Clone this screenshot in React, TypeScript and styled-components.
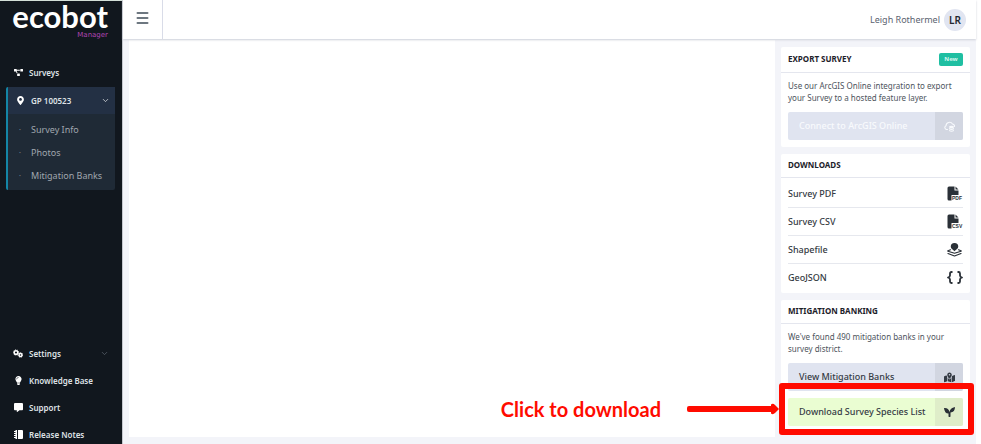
import React from "react";
import styled, { createGlobalStyle } from "styled-components";
import {
  FaProjectDiagram,
  FaMapMarkerAlt,
  FaLightbulb,
} from "react-icons/fa";
import { FaMapLocationDot, FaMessage } from "react-icons/fa6";
import { FiChevronDown } from "react-icons/fi";

const GlobalStyle = createGlobalStyle`
  * { box-sizing: border-box; }
  body { margin: 0; background: #fff; font-family: "Noto Sans", "Open Sans", sans-serif; color: #2a3038; }
  button { font: inherit; color: inherit; border: 0; padding: 0; background: none; cursor: pointer; }
  a { color: inherit; text-decoration: none; }
  h2, p, ul { margin: 0; padding: 0; }
  ul { list-style: none; }
`;

const Shell = styled.div`
  display: flex;
  height: 100vh;
  overflow: hidden;
  padding-right: 5px;
`;

const Sidebar = styled.aside`
  width: 123px;
  flex: none;
  display: flex;
  flex-direction: column;
  background: #11171e;
  border-top: 1px solid #d3dfd8;
  border-right: 1px solid #c5c8cf;
  color: #dfe2e6;
`;

const Brand = styled.a`
  display: flex;
  flex-direction: column;
  align-items: flex-end;
  height: 58px;
  flex: none;
  padding-right: 14px;
`;

const BrandName = styled.span`
  font: 700 31px/30px Lato, sans-serif;
  color: #fff;
`;

const BrandSub = styled.span`
  font: 400 7px/8px "DejaVu Sans", sans-serif;
  color: #b044b2;
`;

const NavLink = styled.a`
  display: flex;
  align-items: center;
  flex: none;
  height: 27px;
  padding: 0 6px 0 13px;
  font-size: 8px;
  font-weight: 600;
  white-space: nowrap;
`;

const NavIcon = styled.span`
  display: flex;
  justify-content: center;
  width: 10px;
  margin-right: 6px;
  color: #fff;
  font-size: 9px;
`;

const Chevron = styled(FiChevronDown)<{ $dim?: boolean }>`
  margin-left: auto;
  font-size: 9px;
  color: ${(p) => (p.$dim ? "#5b636d" : "#dfe2e6")};
`;

const Group = styled.div`
  flex: none;
  margin: 1px 7px 0 6px;
  border-left: 2px solid #1485a6;
  border-radius: 2px;
  background: #1f2a36;
`;

const GroupHeader = styled(NavLink)`
  background: #233044;
  padding: 0 5px 0 7px;
`;

const SubList = styled.ul`
  padding: 4px 0 3px;
`;

const SubLink = styled.a`
  display: flex;
  align-items: center;
  height: 23px;
  font-size: 9px;
  color: #a0a7af;

  &::before {
    content: "·";
    width: 10px;
    margin: 0 6px 0 7px;
    text-align: center;
    color: #69737e;
  }
`;

const FooterNav = styled.nav`
  flex: none;
  margin-top: 150px;
  & ${Chevron} { margin-right: 7px; }
`;

const Main = styled.div`
  flex: 1;
  min-width: 0;
  display: flex;
  flex-direction: column;
  background: #f3f4f9;
`;

const Header = styled.header`
  display: flex;
  align-items: center;
  flex: none;
  height: 39px;
  padding-right: 10px;
  background: #fff;
  box-shadow: 0 1px 2px #cfd2da;
  z-index: 1;
`;

const MenuButton = styled.button`
  display: flex;
  align-items: center;
  justify-content: center;
  align-self: stretch;
  width: 40px;
  padding-bottom: 3px;
  border-right: 1px solid #d9dce8;
  color: #6d7780;
`;

const User = styled.div`
  display: flex;
  align-items: center;
  gap: 4px;
  margin-left: auto;
  font-size: 9px;
  color: #5b6370;
`;

const Avatar = styled.span`
  display: grid;
  place-items: center;
  width: 22px;
  height: 22px;
  border-radius: 50%;
  background: #e1e5f1;
  color: #22272f;
  font-size: 10px;
  font-weight: 600;
`;

const Body = styled.main`
  flex: 1;
  min-height: 0;
  display: flex;
  gap: 6px;
  padding: 1px 6px 7px;
`;

const Canvas = styled.section`
  flex: 1;
  background: #fff;
`;

const Side = styled.div`
  width: 189px;
  flex: none;
  display: flex;
  flex-direction: column;
  gap: 7px;
  padding-top: 7px;
`;

const Card = styled.section`
  background: #fff;
  border-radius: 2px;
`;

const CardHeader = styled.div`
  display: flex;
  align-items: center;
  justify-content: space-between;
  padding: 5px 7px 6px;
  border-bottom: 1px solid #e4e6ee;
`;

const CardTitle = styled.h2`
  font-size: 8px;
  line-height: 12px;
  font-weight: 700;
  color: #1c2129;
`;

const Tag = styled.span`
  width: 24px;
  height: 13px;
  margin-top: 1px;
  border-radius: 2px;
  background: #1fbfa2;
  color: #d6f6ef;
  font-size: 6px;
  font-weight: 700;
  line-height: 13px;
  text-align: center;
`;

const CardBody = styled.div`
  padding: 7px;
`;

const Note = styled.p`
  margin-bottom: 8px;
  font-size: 8px;
  line-height: 12px;
  color: #4d545d;
`;

const Action = styled.button<{ $tone: "blue" | "green"; $faded?: boolean }>`
  display: flex;
  width: 100%;
  height: 28px;
  border-radius: 2px;
  overflow: hidden;
  background: ${(p) => (p.$tone === "green" ? "#eafdd2" : "#e0e4f0")};
  color: ${(p) => (p.$faded ? "#f8fafd" : "#353b44")};
  font-size: 9px;
  font-weight: 500;
  white-space: nowrap;
`;

const ActionLabel = styled.span`
  flex: 1;
  padding-left: 11px;
  line-height: 28px;
  text-align: left;
`;

const ActionIcon = styled.span<{ $tone: "blue" | "green" }>`
  display: grid;
  place-items: center;
  width: 28px;
  height: 28px;
  font-size: 11px;
  background: ${(p) => (p.$tone === "green" ? "#dfedc9" : "#d2d6e1")};
`;

const Downloads = styled.ul`
  padding: 2px 7px 1px;
`;

const DownloadRow = styled.li`
  height: 28px;
  border-bottom: 1px solid #e6e8ee;
  &:last-child { border-bottom-color: transparent; }
`;

const DownloadLink = styled.a`
  display: flex;
  align-items: center;
  justify-content: space-between;
  height: 27px;
  font-size: 9px;
  font-weight: 500;
  color: #343a42;
`;

const DownloadIcon = styled.span`
  display: grid;
  place-items: center;
  width: 17px;
`;

const Callout = styled.div`
  position: relative;
  margin-top: 7px;
`;

const Frame = styled.div`
  position: absolute;
  inset: -15px -11px -9px -9px;
  border: 6px solid #ff0b00;
  border-radius: 3px;
  pointer-events: none;
`;

const Pointer = styled.div`
  position: absolute;
  top: -2px;
  right: 100%;
  display: flex;
  align-items: center;
  gap: 26px;
  height: 26px;
  margin-right: 9px;
  font: 700 20px/26px Lato, sans-serif;
  color: #ff0b00;
  white-space: nowrap;
`;

const MenuIcon = () => (
  <svg width="13" height="12" viewBox="0 0 13 12" stroke="currentColor" strokeWidth="2" strokeLinecap="round">
    <path d="M1.500 1h10M1.500 6h10M1.500 11h10" />
  </svg>
);

const GearsIcon = () => (
  <svg width="10" height="9" viewBox="0 0 20 18" fill="none" stroke="currentColor">
    <g strokeWidth="3">
      <circle cx="6" cy="7" r="3.600" />
      <circle cx="15" cy="12" r="3" />
    </g>
    <g strokeWidth="1.600" strokeDasharray="2 1.800">
      <circle cx="6" cy="7" r="5.400" />
      <circle cx="15" cy="12" r="4.600" />
    </g>
  </svg>
);

const NotebookIcon = () => (
  <svg width="9" height="9" viewBox="0 0 18 18" fill="currentColor">
    <path d="M3 0h3v18H3v-2H0v-2h3v-2H0v-2h3V8H0V6h3V4H0V2h3zM8 0h8a2 2 0 0 1 2 2v14a2 2 0 0 1-2 2H8z" />
  </svg>
);

const FileIcon = ({ kind }: { kind: string }) => (
  <svg width="16" height="15" viewBox="0 0 32 30" fill="#2a3037">
    <path d="M4 1h11v8h8v9H9v11H4a3 3 0 0 1-3-3V4a3 3 0 0 1 3-3zM17 1l6 6h-6z" />
    <text x="10" y="28" fontFamily="Liberation Sans, sans-serif" fontWeight="700" fontSize="10">{kind}</text>
  </svg>
);

const ShapeIcon = () => (
  <svg width="15" height="14" viewBox="0 0 30 28" fill="#2a3037">
    <path d="M15 0a7.500 7.500 0 0 1 7.500 7.500c0 4-4 5.500-7.500 9-3.500-3.500-7.500-5-7.500-9A7.500 7.500 0 0 1 15 0z" />
    <g fill="none" stroke="#2a3037" strokeWidth="2.400" strokeLinejoin="round" strokeLinecap="round">
      <path d="M7 13.500l-5 2q-1 .5 0 1l13 4 13-4q1-.5 0-1l-5-2" />
      <path d="M2 21l13 5 13-5" />
    </g>
  </svg>
);

const BracesIcon = () => (
  <svg width="16" height="13" viewBox="0 0 32 26" fill="none" stroke="#2a3037" strokeWidth="3.600" strokeLinejoin="round">
    <path d="M11 2H9Q6 2 6 5v4q0 3-4 4 4 1 4 4v4q0 3 3 3h2M21 2h2q3 0 3 3v4q0 3 4 4-4 1-4 4v4q0 3-3 3h-2" />
  </svg>
);

const CloudIcon = () => (
  <svg width="11" height="11" viewBox="0 0 22 22" fill="none" stroke="currentColor" strokeWidth="2.200" strokeLinecap="round">
    <path d="M7 17H5a4 4 0 0 1-1-7.600A7 7 0 0 1 17 6a4.500 4.500 0 0 1 4 5" />
    <g fill="currentColor" stroke="none">
      <ellipse cx="15" cy="12" rx="5" ry="2.400" />
      <path d="M10 14q5 3 10 0v2.500q-5 3-10 0zM10 18q5 3 10 0v2q-5 3-10 0z" />
    </g>
  </svg>
);

const SeedlingIcon = () => (
  <svg width="11" height="10" viewBox="0 0 22 20" fill="#2a3037">
    <path d="M0 2q9-1 11 8 1-8 11-10 0 10-9 11v8q-2 2-4 0v-6Q1 13 0 2z" />
  </svg>
);

const subItems = ["Survey Info", "Photos", "Mitigation Banks"];

const footerItems = [
  { label: "Settings", icon: <GearsIcon />, expands: true },
  { label: "Knowledge Base", icon: <FaLightbulb /> },
  { label: "Support", icon: <FaMessage /> },
  { label: "Release Notes", icon: <NotebookIcon /> },
];

const downloads = [
  { label: "Survey PDF", icon: <FileIcon kind="PDF" /> },
  { label: "Survey CSV", icon: <FileIcon kind="CSV" /> },
  { label: "Shapefile", icon: <ShapeIcon /> },
  { label: "GeoJSON", icon: <BracesIcon /> },
];

export default function App() {
  return (
    <>
      <GlobalStyle />
      <Shell>
        <Sidebar>
          <Brand href="#">
            <BrandName>ecobot</BrandName>
            <BrandSub>Manager</BrandSub>
          </Brand>
          <NavLink href="#surveys">
            <NavIcon><FaProjectDiagram /></NavIcon>
            Surveys
          </NavLink>
          <Group>
            <GroupHeader href="#survey">
              <NavIcon><FaMapMarkerAlt /></NavIcon>
              GP 100523
              <Chevron />
            </GroupHeader>
            <SubList>
              {subItems.map((label) => (
                <li key={label}><SubLink href="#item">{label}</SubLink></li>
              ))}
            </SubList>
          </Group>
          <FooterNav>
            {footerItems.map((item) => (
              <NavLink key={item.label} href="#more">
                <NavIcon>{item.icon}</NavIcon>
                {item.label}
                {item.expands && <Chevron $dim />}
              </NavLink>
            ))}
          </FooterNav>
        </Sidebar>
        <Main>
          <Header>
            <MenuButton aria-label="Toggle menu"><MenuIcon /></MenuButton>
            <User>
              Leigh Rothermel
              <Avatar>LR</Avatar>
            </User>
          </Header>
          <Body>
            <Canvas />
            <Side>
              <Card>
                <CardHeader>
                  <CardTitle>EXPORT SURVEY</CardTitle>
                  <Tag>New</Tag>
                </CardHeader>
                <CardBody>
                  <Note>Use our ArcGIS Online integration to export your Survey to a hosted feature layer.</Note>
                  <Action $tone="blue" $faded>
                    <ActionLabel>Connect to ArcGIS Online</ActionLabel>
                    <ActionIcon $tone="blue"><CloudIcon /></ActionIcon>
                  </Action>
                </CardBody>
              </Card>
              <Card>
                <CardHeader><CardTitle>DOWNLOADS</CardTitle></CardHeader>
                <Downloads>
                  {downloads.map((d) => (
                    <DownloadRow key={d.label}>
                      <DownloadLink href="#download">
                        {d.label}
                        <DownloadIcon>{d.icon}</DownloadIcon>
                      </DownloadLink>
                    </DownloadRow>
                  ))}
                </Downloads>
              </Card>
              <Card>
                <CardHeader><CardTitle>MITIGATION BANKING</CardTitle></CardHeader>
                <CardBody>
                  <Note>We've found 490 mitigation banks in your survey district.</Note>
                  <Action $tone="blue">
                    <ActionLabel>View Mitigation Banks</ActionLabel>
                    <ActionIcon $tone="blue"><FaMapLocationDot /></ActionIcon>
                  </Action>
                  <Callout>
                    <Action $tone="green">
                      <ActionLabel>Download Survey Species List</ActionLabel>
                      <ActionIcon $tone="green"><SeedlingIcon /></ActionIcon>
                    </Action>
                    <Frame />
                    <Pointer>
                      Click to download
                      <svg width="92" height="12" viewBox="0 0 92 12" fill="#ff0b00">
                        <rect x="0" y="3" width="88" height="6" rx="2" />
                        <path d="M84 1.500Q86 0 88 2l4 4-4 4q-2 2-4 .5z" />
                      </svg>
                    </Pointer>
                  </Callout>
                </CardBody>
              </Card>
            </Side>
          </Body>
        </Main>
      </Shell>
    </>
  );
}
